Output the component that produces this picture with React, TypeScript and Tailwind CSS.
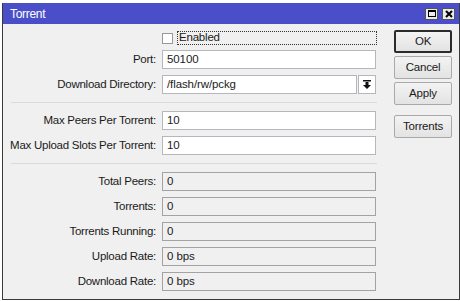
import { useState } from "react";

const font = { fontFamily: '"Liberation Sans", Arial, sans-serif' };

const Field = ({ label, value, readOnly }: { label: string; value: string; readOnly?: boolean }) => (
  <div className="flex items-center h-[19px]">
    <div className="w-[154px] pr-[1px] text-right text-[11.5px] tracking-[-0.25px] text-[#1a1a1a] whitespace-nowrap">
      {label}:
    </div>
    <div
      className={`ml-[5px] w-[214px] h-[19px] flex items-center pl-[4px] text-[11.5px] tracking-[-0.1px] text-[#1a1a1a] border ${
        readOnly ? "bg-[#f0f0f0] border-[#a3a3a3]" : "bg-white border-[#b5b7bd]"
      }`}
    >
      {value}
    </div>
  </div>
);

const Separator = () => <div className="my-[8px] ml-[8px] w-[366px] h-[1px] bg-[#dadada]" />;

const Btn = ({ children, primary, className = "" }: { children: string; primary?: boolean; className?: string }) => (
  <button
    className={`w-[58px] h-[23px] text-[11.5px] tracking-[-0.2px] text-[#1a1a1a] rounded-[2px] bg-gradient-to-b from-[#f3f3f3] to-[#e3e3e3] ${
      primary ? "border-2 border-[#2b2b2b]" : "border border-[#a9a9a9]"
    } ${className}`}
  >
    {children}
  </button>
);

export default function App() {
  const [enabled, setEnabled] = useState(false);
  return (
    <div className="w-[460px] h-[301px] bg-white overflow-hidden" style={font}>
      <div className="mt-[3px] ml-[2px] w-[458px] h-[297px] flex flex-col border border-t-0 border-[#3a3a3a] bg-[#f0f0f0]">
        <div className="h-[21px] bg-[#4a4ec8] flex items-center justify-between pl-[7px] pr-[4px]">
          <span className="text-[12px] tracking-[-0.3px] text-white">Torrent</span>
          <div className="flex gap-[4px]">
            <div className="w-[13px] h-[12px] bg-[#ececec] border border-[#555] flex items-center justify-center">
              <div className="w-[8px] h-[7px] border border-black border-t-2" />
            </div>
            <div className="w-[13px] h-[12px] bg-[#ececec] border border-[#555] flex items-center justify-center">
              <svg width="8" height="8" viewBox="0 0 8 8">
                <path d="M1 1L7 7M7 1L1 7" stroke="#000" strokeWidth="2" />
              </svg>
            </div>
          </div>
        </div>
        <div className="flex">
          <div className="flex flex-col pt-[7px]">
            <div className="flex items-center h-[14px] mb-[5px]">
              <div className="w-[159px]" />
              <div
                className="w-[11px] h-[11px] bg-white border border-[#999] flex items-center justify-center cursor-pointer"
                onClick={() => setEnabled(!enabled)}
              >
                {enabled && <span className="text-[9px] leading-none">✓</span>}
              </div>
              <div className="ml-[4px] w-[200px] h-[14px] border border-dotted border-[#333] flex items-center pl-[1px] text-[11.5px] tracking-[-0.2px] text-[#1a1a1a]">
                Enabled
              </div>
            </div>
            <div className="flex flex-col gap-[6px]">
              <Field label="Port" value="50100" />
              <div className="flex items-center h-[19px]">
                <div className="w-[154px] pr-[1px] text-right text-[11.5px] tracking-[-0.25px] text-[#1a1a1a]">
                  Download Directory:
                </div>
                <div className="ml-[5px] w-[195px] h-[19px] flex items-center pl-[4px] text-[11.5px] tracking-[-0.1px] text-[#1a1a1a] bg-white border border-[#b5b7bd]">
                  /flash/rw/pckg
                </div>
                <div className="ml-[1px] w-[18px] h-[19px] bg-white border border-[#b5b7bd] flex items-center justify-center">
                  <svg width="8" height="9" viewBox="0 0 8 9">
                    <rect x="0" y="0" width="8" height="1.5" fill="#111" />
                    <rect x="2.5" y="2" width="3" height="3" fill="#111" />
                    <path d="M0 5H8L4 9Z" fill="#111" />
                  </svg>
                </div>
              </div>
            </div>
            <Separator />
            <div className="flex flex-col gap-[6px]">
              <Field label="Max Peers Per Torrent" value="10" />
              <Field label="Max Upload Slots Per Torrent" value="10" />
            </div>
            <Separator />
            <div className="flex flex-col gap-[6px]">
              <Field label="Total Peers" value="0" readOnly />
              <Field label="Torrents" value="0" readOnly />
              <Field label="Torrents Running" value="0" readOnly />
              <Field label="Upload Rate" value="0 bps" readOnly />
              <Field label="Download Rate" value="0 bps" readOnly />
            </div>
          </div>
          <div className="ml-[17px] pt-[6px] flex flex-col gap-[3px]">
            <Btn primary>OK</Btn>
            <Btn>Cancel</Btn>
            <Btn>Apply</Btn>
            <Btn className="mt-[7px]">Torrents</Btn>
          </div>
        </div>
      </div>
    </div>
  );
}
